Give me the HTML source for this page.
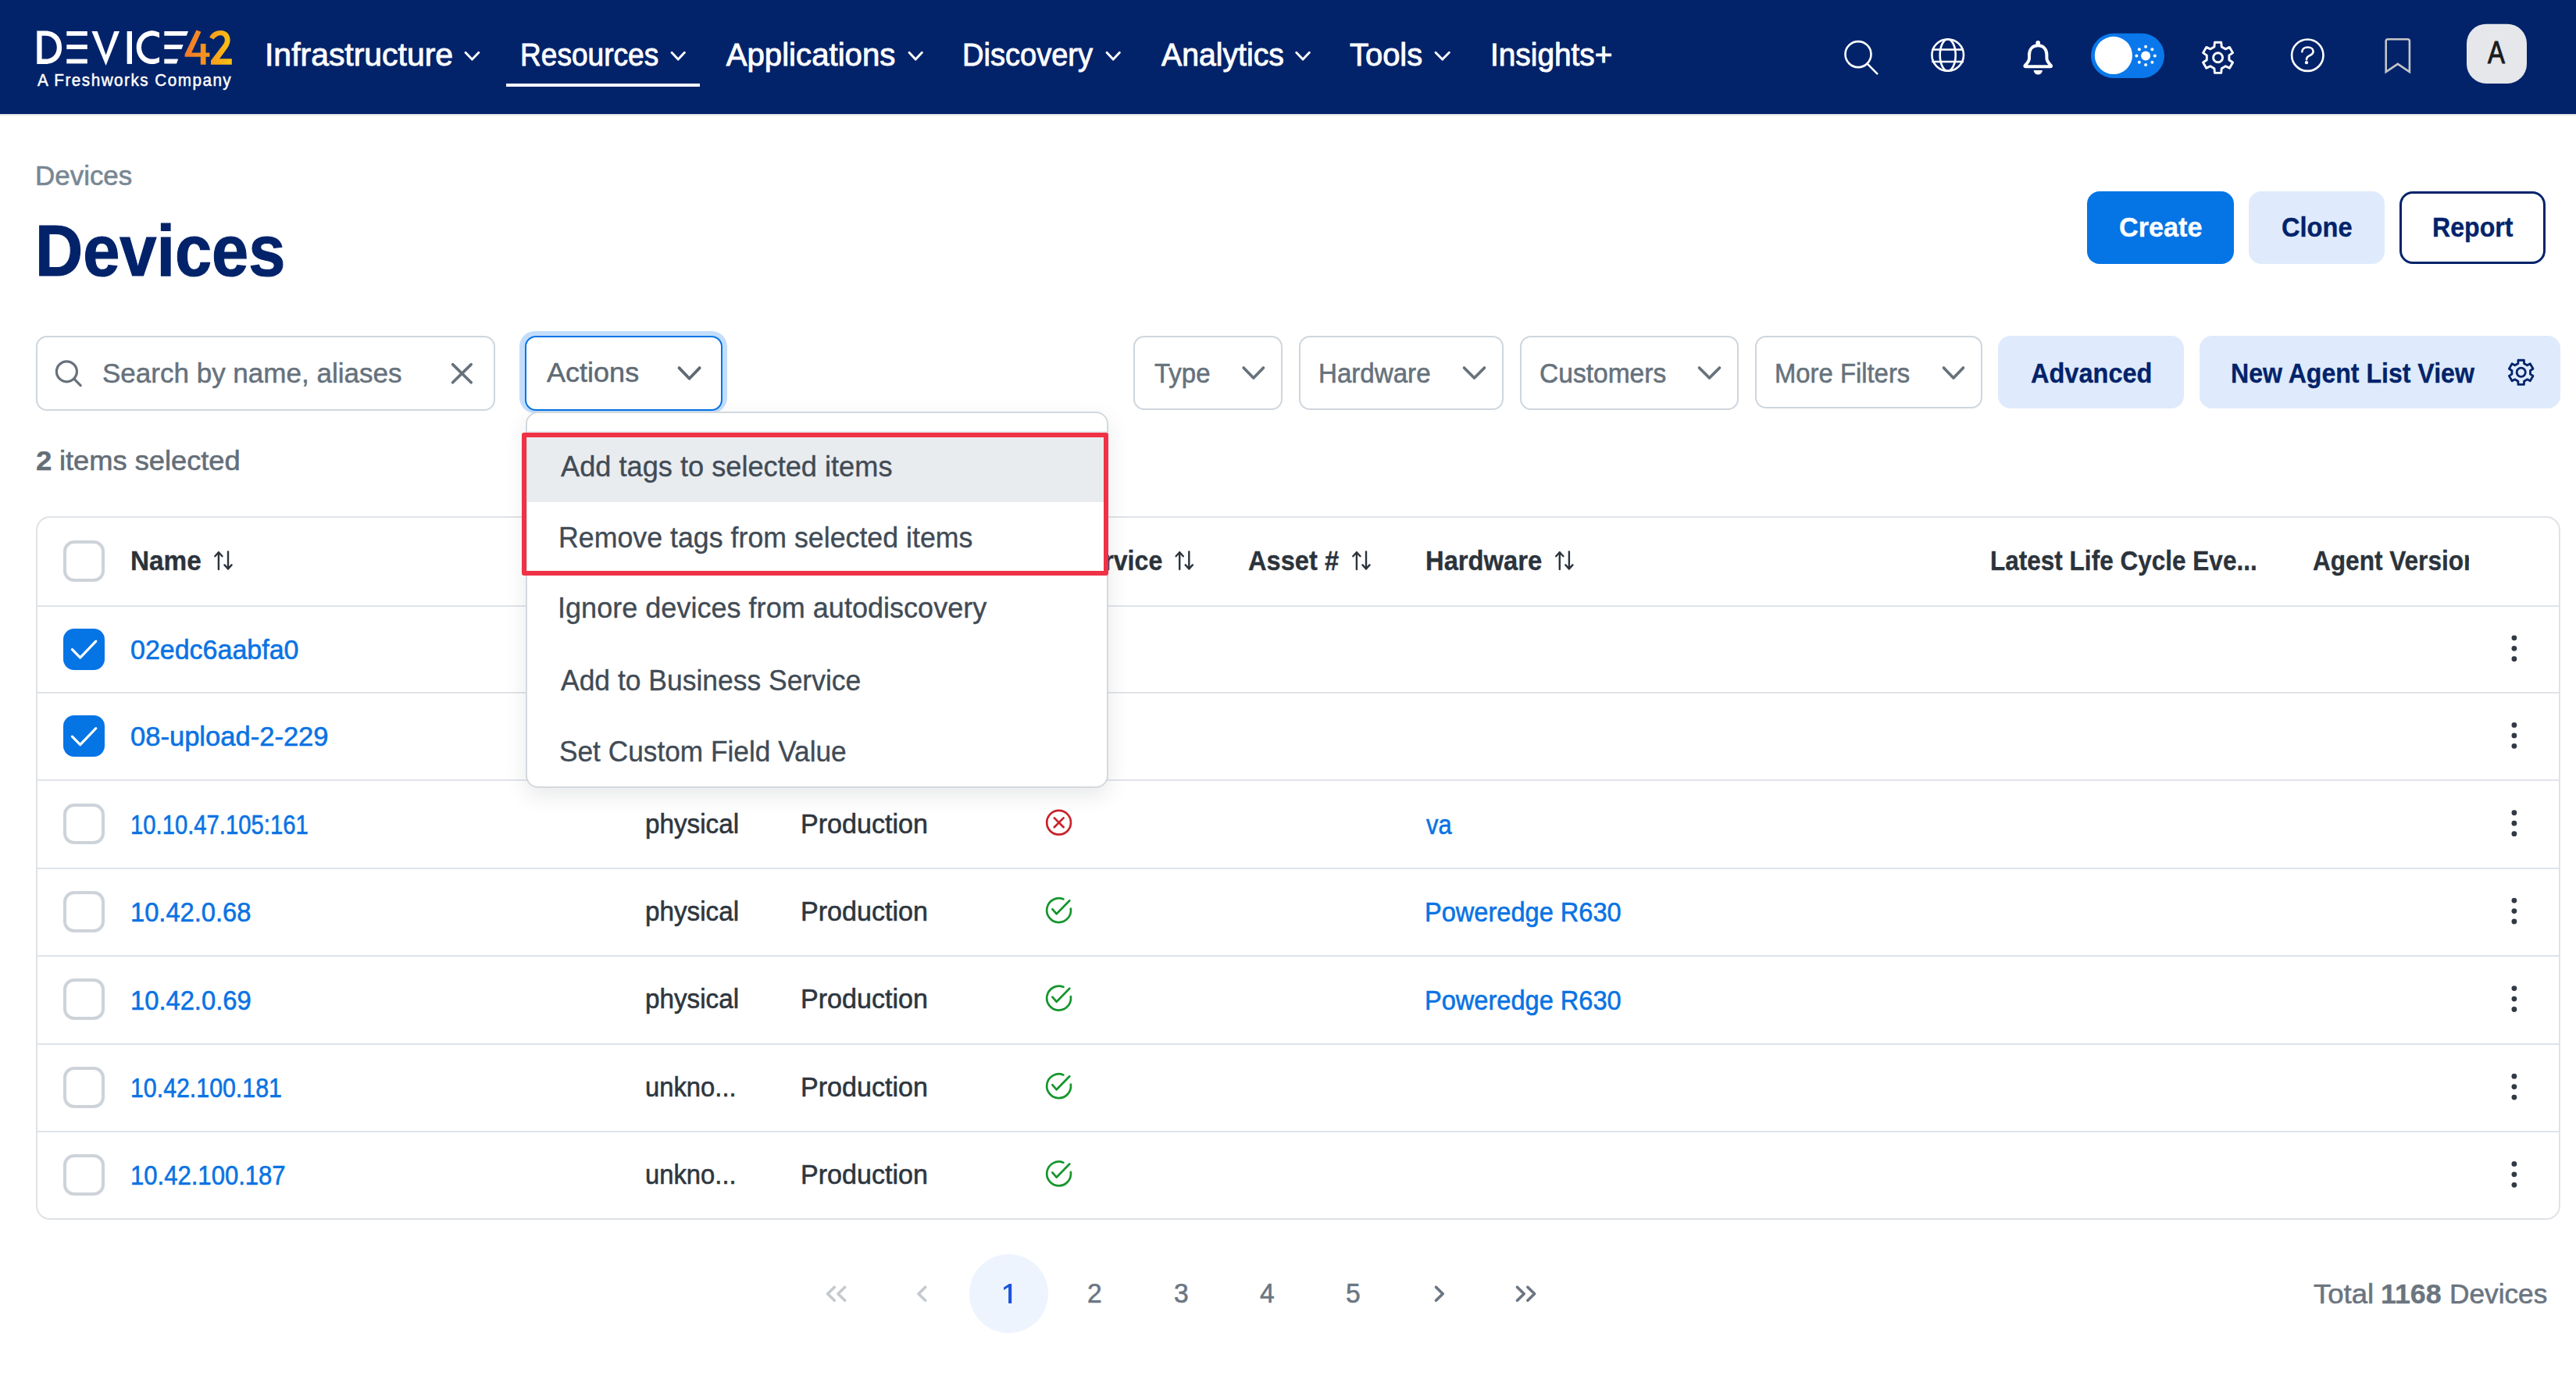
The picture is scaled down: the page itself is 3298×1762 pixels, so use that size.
<!DOCTYPE html>
<html><head><meta charset="utf-8"><title>Devices</title>
<style>
html,body{margin:0;padding:0;}
body{width:3298px;height:1762px;overflow:hidden;position:relative;background:#fff;font-family:"Liberation Sans",sans-serif;}
.t{position:absolute;white-space:nowrap;line-height:1;transform-origin:0 0;}
.r{position:absolute;}
svg.r{overflow:visible}
</style></head><body>
<div class="r" style="left:0.00px;top:0.00px;width:3298.00px;height:146.00px;background:#02236a"></div>
<div class="r" style="left:0.00px;top:146.00px;width:3298.00px;height:2.00px;background:#e3e7ea"></div>
<svg class="r" style="left:0px;top:0px;" width="320" height="146" viewBox="0 0 320 146" fill="none">
<defs><linearGradient id="g42" x1="236" y1="0" x2="298" y2="0" gradientUnits="userSpaceOnUse">
<stop offset="0" stop-color="#f2772a"/><stop offset="0.45" stop-color="#f7951e"/><stop offset="1" stop-color="#fcc412"/></linearGradient></defs>
<g fill="#fff">
<path d="M47.3,39.4 H58 C71,39.4 79.1,48 79.1,60.65 C79.1,73.3 71,81.9 58,81.9 H47.3 Z M53.6,45.7 V75.6 H58 C67,75.6 72.8,69.5 72.8,60.65 C72.8,51.8 67,45.7 58,45.7 Z" fill-rule="evenodd"/>
<rect x="85.3" y="40" width="26.5" height="5.8"/>
<rect x="85.3" y="57.2" width="26.5" height="5.8"/>
<rect x="85.3" y="75.6" width="26.5" height="5.8"/>
<path d="M117.4,40 H124.6 L135.6,70.5 L146.2,40 H153 L135.6,84 Z"/>
<rect x="162.6" y="40" width="6.4" height="41.9"/>
<path d="M204,41.8 C200.8,40 197.8,39.2 195.3,39.2 C183.4,39.2 174.7,48.5 174.7,60.65 C174.7,72.8 183.4,82.1 195.3,82.1 C197.8,82.1 200.8,81.3 204,79.5 V72.9 C201,74.7 198.2,75.6 195.3,75.6 C187,75.6 181,69 181,60.65 C181,52.3 187,45.7 195.3,45.7 C198.2,45.7 201,46.6 204,48.4 Z"/>
<path d="M210.3,40 H241 L238.8,45.8 H210.3 Z"/>
<path d="M210.3,57.2 H234.6 L232.4,63 H210.3 Z"/>
<path d="M210.3,75.6 H228.2 L226,81.4 H210.3 Z"/>
</g>
<g fill="url(#g42)">
<path d="M251.4,38.6 L257.4,40.8 L245.2,67.6 H256.8 V56.1 H263.5 V67.6 H268.4 V72.8 H263.5 V82.8 H256.8 V72.8 H236.6 V69.4 Z"/>
<path d="M268.2,47.8 C270.8,42.2 276.2,39 282.6,39 C290.2,39 294.6,44.3 294.6,51.2 C294.6,55.6 292.8,59.2 290,63 L281,75.3 H296.8 V82.8 H270 V77.5 L284.6,58.6 C286.8,55.8 287.8,53.6 287.8,51.3 C287.8,47.9 285.8,45.3 282.4,45.3 C278.9,45.3 276,47.3 273.6,50.6 Z"/>
</g></svg>
<div class="t" style="left:48.00px;top:92.27px;font-size:22.00px;color:#fff;transform:scaleX(0.9385);-webkit-text-stroke:0.5px #fff;letter-spacing:1.6px;">A Freshworks Company</div>
<div class="t" style="left:339.02px;top:50.96px;font-size:40.20px;color:#fff;transform:scaleX(1.0183);-webkit-text-stroke:0.9px #fff;">Infrastructure</div>
<svg class="r" style="left:592px;top:60px;" width="24" height="22" viewBox="592 60 24 22" fill="none"><polyline points="596.00,67.2 604.45,76.1 612.90,67.2" stroke="#fff" stroke-width="2.9" stroke-linecap="round" stroke-linejoin="round"/></svg>
<div class="t" style="left:666.43px;top:50.96px;font-size:40.20px;color:#fff;transform:scaleX(0.9225);-webkit-text-stroke:0.9px #fff;">Resources</div>
<svg class="r" style="left:856px;top:60px;" width="24" height="22" viewBox="856 60 24 22" fill="none"><polyline points="860.00,67.2 868.20,76.1 876.40,67.2" stroke="#fff" stroke-width="2.9" stroke-linecap="round" stroke-linejoin="round"/></svg>
<div class="t" style="left:929.70px;top:50.96px;font-size:40.20px;color:#fff;-webkit-text-stroke:0.9px #fff;">Applications</div>
<svg class="r" style="left:1160px;top:60px;" width="24" height="22" viewBox="1160 60 24 22" fill="none"><polyline points="1164.00,67.2 1172.20,76.1 1180.40,67.2" stroke="#fff" stroke-width="2.9" stroke-linecap="round" stroke-linejoin="round"/></svg>
<div class="t" style="left:1231.85px;top:50.96px;font-size:40.20px;color:#fff;transform:scaleX(0.9471);-webkit-text-stroke:0.9px #fff;">Discovery</div>
<svg class="r" style="left:1413px;top:60px;" width="24" height="22" viewBox="1413 60 24 22" fill="none"><polyline points="1417.00,67.2 1425.20,76.1 1433.40,67.2" stroke="#fff" stroke-width="2.9" stroke-linecap="round" stroke-linejoin="round"/></svg>
<div class="t" style="left:1486.50px;top:50.96px;font-size:40.20px;color:#fff;transform:scaleX(0.9756);-webkit-text-stroke:0.9px #fff;">Analytics</div>
<svg class="r" style="left:1655px;top:60px;" width="25" height="22" viewBox="1655 60 25 22" fill="none"><polyline points="1659.70,67.2 1668.05,76.1 1676.40,67.2" stroke="#fff" stroke-width="2.9" stroke-linecap="round" stroke-linejoin="round"/></svg>
<div class="t" style="left:1728.20px;top:50.96px;font-size:40.20px;color:#fff;transform:scaleX(0.9928);-webkit-text-stroke:0.9px #fff;">Tools</div>
<svg class="r" style="left:1834px;top:60px;" width="25" height="22" viewBox="1834 60 25 22" fill="none"><polyline points="1838.00,67.2 1846.70,76.1 1855.40,67.2" stroke="#fff" stroke-width="2.9" stroke-linecap="round" stroke-linejoin="round"/></svg>
<div class="t" style="left:1907.51px;top:50.96px;font-size:40.20px;color:#fff;transform:scaleX(0.9656);-webkit-text-stroke:0.9px #fff;">Insights+</div>
<div class="r" style="left:648.40px;top:107.00px;width:248.10px;height:4.00px;background:#fff"></div>
<svg class="r" style="left:2300px;top:0px;" width="998" height="146" viewBox="2300 0 998 146" fill="none">
<g stroke="#fff" stroke-width="2.6" fill="none" stroke-linecap="round" stroke-linejoin="round">
<circle cx="2379" cy="69.6" r="16.5"/>
<line x1="2391.2" y1="82.2" x2="2403.3" y2="94.3"/>
<circle cx="2493.7" cy="70.5" r="20.3"/>
<ellipse cx="2493.7" cy="70.5" rx="10" ry="20.3"/>
<line x1="2474.5" y1="63.5" x2="2512.9" y2="63.5"/>
<line x1="2474.5" y1="79" x2="2512.9" y2="79"/>
</g>
<path d="M2609.2,58.3 C2602,58.3 2598,63.5 2598,70.5 V74.5 C2598,78 2595.5,81 2592.6,84 C2592,84.8 2592.5,85.3 2593.5,85.3 H2624.9 C2625.9,85.3 2626.4,84.8 2625.8,84 C2622.9,81 2620.4,78 2620.4,74.5 V70.5 C2620.4,63.5 2616.4,58.3 2609.2,58.3 Z" stroke="#fff" stroke-width="4" fill="none" stroke-linejoin="round"/>
<rect x="2606.4" y="52" width="5.6" height="6" rx="2.6" fill="#fff"/>
<path d="M2603.7,90 H2614.9 A5.6,5.6 0 0 1 2603.7,90 Z" fill="#fff"/>
<rect x="2677" y="42.8" width="94" height="57.2" rx="28.6" fill="#0a78eb"/>
<circle cx="2705.9" cy="70.9" r="24.1" fill="#fff"/>
<circle cx="2747.1" cy="71.4" r="6" fill="#fff"/>
<circle cx="2758.80" cy="71.40" r="2" fill="#fff"/><circle cx="2755.37" cy="79.67" r="2" fill="#fff"/><circle cx="2747.10" cy="83.10" r="2" fill="#fff"/><circle cx="2738.83" cy="79.67" r="2" fill="#fff"/><circle cx="2735.40" cy="71.40" r="2" fill="#fff"/><circle cx="2738.83" cy="63.13" r="2" fill="#fff"/><circle cx="2747.10" cy="59.70" r="2" fill="#fff"/><circle cx="2755.37" cy="63.13" r="2" fill="#fff"/><g stroke="#fff" stroke-width="2.9" fill="none" stroke-linejoin="round"><path d="M2835.44,54.24 L2843.76,54.24 L2844.26,59.96 L2849.26,62.85 L2854.46,60.42 L2858.62,67.62 L2853.91,70.91 L2853.91,76.69 L2858.62,79.98 L2854.46,87.18 L2849.26,84.75 L2844.26,87.64 L2843.76,93.36 L2835.44,93.36 L2834.94,87.64 L2829.94,84.75 L2824.74,87.18 L2820.58,79.98 L2825.29,76.69 L2825.29,70.91 L2820.58,67.62 L2824.74,60.42 L2829.94,62.85 L2834.94,59.96 Z"/><circle cx="2839.6" cy="73.8" r="6"/></g><g stroke="#fff" stroke-width="2.6" fill="none" stroke-linecap="round" stroke-linejoin="round">
<circle cx="2954.3" cy="70.7" r="20.2"/>
<path d="M2947.3,66.3 C2947.3,62.5 2950.5,60.5 2954.5,60.5 C2958.7,60.5 2961.6,62.8 2961.6,66 C2961.6,69.5 2958,70.5 2955.5,72 C2953.8,73 2953,74 2953,76.3"/>
</g>
<circle cx="2953" cy="80.2" r="2.1" fill="#fff"/>
<path d="M3054.7,92 V52.5 C3054.7,51 3056,50.3 3057.3,50.3 H3082.5 C3083.8,50.3 3084.9,51.2 3084.9,52.5 V92 L3069.8,81.8 Z" stroke="#c6c6c6" stroke-width="2.6" fill="none" stroke-linejoin="miter"/>
<rect x="3158" y="30.7" width="77" height="76.2" rx="25" fill="#e5e7eb"/>
</svg>
<div class="t" style="left:3185.00px;top:47.50px;font-size:39.80px;color:#1b1b1b;transform:scaleX(0.8274);-webkit-text-stroke:1.0px #1b1b1b;">A</div>
<div class="t" style="left:44.70px;top:208.34px;font-size:35.50px;color:#778793;transform:scaleX(0.9843);-webkit-text-stroke:0.6px #778793;">Devices</div>
<div class="t" style="left:44.79px;top:274.13px;font-size:93.50px;color:#02236a;font-weight:700;transform:scaleX(0.9059);-webkit-text-stroke:1.2px #02236a;">Devices</div>
<div class="r" style="left:2672.00px;top:245.00px;width:188.00px;height:93.00px;background:#0574e5;border-radius:16px"></div>
<div class="t" style="left:2712.63px;top:273.37px;font-size:35.00px;color:#fff;font-weight:700;transform:scaleX(0.9774);-webkit-text-stroke:0.35px #fff;">Create</div>
<div class="r" style="left:2879.00px;top:245.00px;width:173.50px;height:93.00px;background:#dfebfc;border-radius:16px"></div>
<div class="t" style="left:2920.90px;top:273.37px;font-size:35.00px;color:#02236a;font-weight:700;transform:scaleX(0.9316);-webkit-text-stroke:0.35px #02236a;">Clone</div>
<div class="r" style="left:3072.00px;top:245.00px;width:186.60px;height:93.00px;background:#fff;border:3px solid #02236a;border-radius:17px;box-sizing:border-box"></div>
<div class="t" style="left:3113.51px;top:273.37px;font-size:35.00px;color:#02236a;font-weight:700;transform:scaleX(0.9179);-webkit-text-stroke:0.35px #02236a;">Report</div>
<div class="r" style="left:45.80px;top:430.40px;width:587.80px;height:95.40px;border:2px solid #cfd6dd;border-radius:14px;box-sizing:border-box;background:#fff"></div>
<svg class="r" style="left:60px;top:450px;" width="60" height="60" viewBox="60 450 60 60" fill="none"><g stroke="#66717c" stroke-width="3.2" fill="none" stroke-linecap="round"><circle cx="85.4" cy="475.8" r="13"/><line x1="94.8" y1="485.2" x2="103.2" y2="493.6"/></g></svg>
<div class="t" style="left:131.42px;top:461.14px;font-size:35.50px;color:#66717c;transform:scaleX(0.9863);-webkit-text-stroke:0.5px #66717c;">Search by name, aliases</div>
<svg class="r" style="left:570px;top:458px;" width="42" height="40" viewBox="570 458 42 40" fill="none"><g stroke="#66717c" stroke-width="3.6" stroke-linecap="round"><line x1="579.6" y1="466.6" x2="603.2" y2="489.8"/><line x1="603.2" y1="466.6" x2="579.6" y2="489.8"/></g></svg>
<div class="r" style="left:665.10px;top:423.80px;width:266.20px;height:105.00px;background:#c3ddfb;border-radius:20px"></div>
<div class="r" style="left:671.90px;top:429.60px;width:252.90px;height:96.60px;background:#fff;border:2.4px solid #0574e5;border-radius:14px;box-sizing:border-box"></div>
<div class="t" style="left:700.00px;top:459.96px;font-size:35.60px;color:#5f6a75;transform:scaleX(1.0128);-webkit-text-stroke:0.5px #5f6a75;">Actions</div>
<svg class="r" style="left:865px;top:465px;" width="36" height="26" viewBox="865 465 36 26" fill="none"><polyline points="869.5,471.1 882.6,484.8 895.7,471.1" stroke="#5f6a75" stroke-width="3.8" fill="none" stroke-linecap="round" stroke-linejoin="round"/></svg>
<div class="r" style="left:1451.40px;top:430.30px;width:190.80px;height:95.00px;border:2px solid #cfd6dd;border-radius:14px;box-sizing:border-box;background:#fff"></div>
<div class="t" style="left:1478.14px;top:460.01px;font-size:35.30px;color:#66727c;transform:scaleX(0.9340);-webkit-text-stroke:0.6px #66727c;">Type</div>
<svg class="r" style="left:1587px;top:465px;" width="36" height="25" viewBox="1587 465 36 25" fill="none"><polyline points="1592.2,471.0 1604.85,484.0 1617.5,471.0" stroke="#66727c" stroke-width="3.7" fill="none" stroke-linecap="round" stroke-linejoin="round"/></svg>
<div class="r" style="left:1662.60px;top:430.30px;width:262.40px;height:95.00px;border:2px solid #cfd6dd;border-radius:14px;box-sizing:border-box;background:#fff"></div>
<div class="t" style="left:1688.05px;top:460.01px;font-size:35.30px;color:#66727c;transform:scaleX(0.9382);-webkit-text-stroke:0.6px #66727c;">Hardware</div>
<svg class="r" style="left:1870px;top:465px;" width="36" height="25" viewBox="1870 465 36 25" fill="none"><polyline points="1874.5,471.0 1887.5,484.0 1900.5,471.0" stroke="#66727c" stroke-width="3.7" fill="none" stroke-linecap="round" stroke-linejoin="round"/></svg>
<div class="r" style="left:1945.50px;top:430.30px;width:280.80px;height:95.00px;border:2px solid #cfd6dd;border-radius:14px;box-sizing:border-box;background:#fff"></div>
<div class="t" style="left:1971.22px;top:460.01px;font-size:35.30px;color:#66727c;transform:scaleX(0.9506);-webkit-text-stroke:0.6px #66727c;">Customers</div>
<svg class="r" style="left:2171px;top:465px;" width="36" height="25" viewBox="2171 465 36 25" fill="none"><polyline points="2175.5,471.0 2188.5,484.0 2201.5,471.0" stroke="#66727c" stroke-width="3.7" fill="none" stroke-linecap="round" stroke-linejoin="round"/></svg>
<div class="r" style="left:2246.60px;top:430.30px;width:291.40px;height:93.10px;border:2px solid #cfd6dd;border-radius:14px;box-sizing:border-box;background:#fff"></div>
<div class="t" style="left:2272.17px;top:460.01px;font-size:35.30px;color:#66727c;transform:scaleX(0.9297);-webkit-text-stroke:0.6px #66727c;">More Filters</div>
<svg class="r" style="left:2484px;top:465px;" width="35" height="25" viewBox="2484 465 35 25" fill="none"><polyline points="2488.5,471.0 2501.0,484.0 2513.5,471.0" stroke="#66727c" stroke-width="3.7" fill="none" stroke-linecap="round" stroke-linejoin="round"/></svg>
<div class="r" style="left:2558.40px;top:430.00px;width:237.60px;height:93.00px;background:#dfebfc;border-radius:16px"></div>
<div class="t" style="left:2600.19px;top:459.97px;font-size:35.00px;color:#02236a;font-weight:700;transform:scaleX(0.9296);-webkit-text-stroke:0.35px #02236a;">Advanced</div>
<div class="r" style="left:2815.80px;top:430.00px;width:461.90px;height:93.00px;background:#dfebfc;border-radius:16px"></div>
<div class="t" style="left:2855.92px;top:459.97px;font-size:35.00px;color:#02236a;font-weight:700;transform:scaleX(0.9163);-webkit-text-stroke:0.35px #02236a;">New Agent List View</div>
<svg class="r" style="left:3200px;top:450px;" width="56" height="54" viewBox="3200 450 56 54" fill="none"><g stroke="#02236a" stroke-width="2.8" fill="none" stroke-linejoin="round"><path d="M3223.96,461.24 L3231.44,461.24 L3231.53,465.43 L3235.64,467.80 L3239.31,465.79 L3243.04,472.26 L3239.46,474.43 L3239.46,479.17 L3243.04,481.34 L3239.31,487.81 L3235.64,485.80 L3231.53,488.17 L3231.44,492.36 L3223.96,492.36 L3223.87,488.17 L3219.76,485.80 L3216.09,487.81 L3212.36,481.34 L3215.94,479.17 L3215.94,474.43 L3212.36,472.26 L3216.09,465.79 L3219.76,467.80 L3223.87,465.43 Z"/><circle cx="3227.7" cy="476.8" r="5.6"/></g></svg>
<div class="t" style="left:45.80px;top:572.74px;font-size:35.50px;color:#646e78;font-weight:700;transform:scaleX(1.0348);-webkit-text-stroke:0.35px #646e78;">2</div>
<div class="t" style="left:75.94px;top:572.74px;font-size:35.50px;color:#646e78;transform:scaleX(1.0211);-webkit-text-stroke:0.6px #646e78;">items selected</div>
<div class="r" style="left:45.80px;top:661.00px;width:3232.50px;height:901.30px;border:2px solid #dfe3e7;border-radius:18px;box-sizing:border-box;background:#fff"></div>
<div class="r" style="left:47.80px;top:775.00px;width:3228.50px;height:2.00px;background:#e0e4e8"></div>
<div class="r" style="left:47.80px;top:886.20px;width:3228.50px;height:2.00px;background:#e0e4e8"></div>
<div class="r" style="left:47.80px;top:998.20px;width:3228.50px;height:2.00px;background:#e0e4e8"></div>
<div class="r" style="left:47.80px;top:1110.80px;width:3228.50px;height:2.00px;background:#e0e4e8"></div>
<div class="r" style="left:47.80px;top:1222.90px;width:3228.50px;height:2.00px;background:#e0e4e8"></div>
<div class="r" style="left:47.80px;top:1335.80px;width:3228.50px;height:2.00px;background:#e0e4e8"></div>
<div class="r" style="left:47.80px;top:1448.00px;width:3228.50px;height:2.00px;background:#e0e4e8"></div>
<div class="r" style="left:81.10px;top:692.00px;width:52.70px;height:52.70px;border:4px solid #cdd3d9;border-radius:14px;box-sizing:border-box;background:#fff"></div>
<div class="t" style="left:166.83px;top:701.15px;font-size:34.90px;color:#2b333b;font-weight:700;transform:scaleX(0.9555);-webkit-text-stroke:0.35px #2b333b;">Name</div>
<svg class="r" style="left:272px;top:700px;" width="29" height="36" viewBox="272 700 29 36" fill="none"><g stroke="#2b333b" stroke-width="2.4" fill="none" stroke-linecap="round" stroke-linejoin="round"><line x1="279.9" y1="707.5" x2="279.9" y2="729"/><polyline points="275.29999999999995,712.3 279.9,707.3 284.5,712.3"/><line x1="292.0" y1="706.5" x2="292.0" y2="728.2"/><polyline points="287.4,723.4 292.0,728.4 296.6,723.4"/></g></svg>
<div class="t" style="left:1373.66px;top:701.15px;font-size:34.90px;color:#2b333b;font-weight:700;transform:scaleX(0.9200);-webkit-text-stroke:0.35px #2b333b;">Service</div>
<svg class="r" style="left:1503px;top:700px;" width="29" height="36" viewBox="1503 700 29 36" fill="none"><g stroke="#2b333b" stroke-width="2.4" fill="none" stroke-linecap="round" stroke-linejoin="round"><line x1="1510.2" y1="707.5" x2="1510.2" y2="729"/><polyline points="1505.6000000000001,712.3 1510.2,707.3 1514.8,712.3"/><line x1="1522.3" y1="706.5" x2="1522.3" y2="728.2"/><polyline points="1517.7,723.4 1522.3,728.4 1526.8999999999999,723.4"/></g></svg>
<div class="t" style="left:1597.98px;top:701.15px;font-size:34.90px;color:#2b333b;font-weight:700;transform:scaleX(0.9353);-webkit-text-stroke:0.35px #2b333b;">Asset #</div>
<svg class="r" style="left:1729px;top:700px;" width="29" height="36" viewBox="1729 700 29 36" fill="none"><g stroke="#2b333b" stroke-width="2.4" fill="none" stroke-linecap="round" stroke-linejoin="round"><line x1="1736.9" y1="707.5" x2="1736.9" y2="729"/><polyline points="1732.3000000000002,712.3 1736.9,707.3 1741.5,712.3"/><line x1="1749.0" y1="706.5" x2="1749.0" y2="728.2"/><polyline points="1744.4,723.4 1749.0,728.4 1753.6,723.4"/></g></svg>
<div class="t" style="left:1824.87px;top:701.15px;font-size:34.90px;color:#2b333b;font-weight:700;transform:scaleX(0.9380);-webkit-text-stroke:0.35px #2b333b;">Hardware</div>
<svg class="r" style="left:1989px;top:700px;" width="29" height="36" viewBox="1989 700 29 36" fill="none"><g stroke="#2b333b" stroke-width="2.4" fill="none" stroke-linecap="round" stroke-linejoin="round"><line x1="1996.8" y1="707.5" x2="1996.8" y2="729"/><polyline points="1992.2,712.3 1996.8,707.3 2001.3999999999999,712.3"/><line x1="2008.8999999999999" y1="706.5" x2="2008.8999999999999" y2="728.2"/><polyline points="2004.3,723.4 2008.8999999999999,728.4 2013.4999999999998,723.4"/></g></svg>
<div class="t" style="left:2547.55px;top:701.15px;font-size:34.90px;color:#2b333b;font-weight:700;transform:scaleX(0.9036);-webkit-text-stroke:0.35px #2b333b;">Latest Life Cycle Eve...</div>
<div class="r" style="left:2940px;top:690px;width:221.4px;height:60px;overflow:hidden">
<div class="t" style="left:20.81px;top:11.15px;font-size:34.9px;font-weight:700;color:#2b333b;transform:scaleX(0.905);-webkit-text-stroke:0.35px #2b333b">Agent Version</div></div>
<div class="r" style="left:81.10px;top:804.60px;width:52.70px;height:53.30px;background:#0574e5;border-radius:14px"></div>
<svg class="r" style="left:81px;top:804px;" width="53" height="54" viewBox="81 804 53 54" fill="none"><polyline points="92.4,831.6 102.7,842.1 122.8,821.1" stroke="#fff" stroke-width="3.2" fill="none" stroke-linecap="round" stroke-linejoin="round"/></svg>
<div class="t" style="left:167.31px;top:814.84px;font-size:34.20px;color:#0a73e3;transform:scaleX(0.9942);-webkit-text-stroke:0.6px #0a73e3;">02edc6aabfa0</div>
<svg class="r" style="left:3205px;top:806px;" width="26" height="50" viewBox="3205 806 26 50" fill="none"><g fill="#323a44"><circle cx="3218.9" cy="816.85" r="3.4"/><circle cx="3218.9" cy="830.30" r="3.4"/><circle cx="3218.9" cy="843.75" r="3.4"/></g></svg>
<div class="r" style="left:81.10px;top:916.20px;width:52.70px;height:53.30px;background:#0574e5;border-radius:14px"></div>
<svg class="r" style="left:81px;top:916px;" width="53" height="54" viewBox="81 916 53 54" fill="none"><polyline points="92.4,943.2 102.7,953.7 122.8,932.7" stroke="#fff" stroke-width="3.2" fill="none" stroke-linecap="round" stroke-linejoin="round"/></svg>
<div class="t" style="left:167.29px;top:926.44px;font-size:34.20px;color:#0a73e3;transform:scaleX(1.0105);-webkit-text-stroke:0.6px #0a73e3;">08-upload-2-229</div>
<svg class="r" style="left:3205px;top:918px;" width="26" height="50" viewBox="3205 918 26 50" fill="none"><g fill="#323a44"><circle cx="3218.9" cy="928.45" r="3.4"/><circle cx="3218.9" cy="941.90" r="3.4"/><circle cx="3218.9" cy="955.35" r="3.4"/></g></svg>
<div class="r" style="left:81.10px;top:1028.50px;width:52.70px;height:52.70px;border:4px solid #cdd3d9;border-radius:14px;box-sizing:border-box;background:#fff"></div>
<div class="t" style="left:166.81px;top:1038.74px;font-size:34.20px;color:#0a73e3;transform:scaleX(0.8556);-webkit-text-stroke:0.6px #0a73e3;">10.10.47.105:161</div>
<div class="t" style="left:825.61px;top:1037.64px;font-size:35.50px;color:#2e363e;transform:scaleX(0.9363);-webkit-text-stroke:0.6px #2e363e;">physical</div>
<div class="t" style="left:1024.77px;top:1037.64px;font-size:35.50px;color:#2e363e;transform:scaleX(0.9598);-webkit-text-stroke:0.6px #2e363e;">Production</div>
<svg class="r" style="left:1330px;top:1031px;" width="52" height="44" viewBox="1330 1031 52 44" fill="none"><g stroke="#c9222b" stroke-width="2.7" fill="none" stroke-linecap="round"><circle cx="1355.6" cy="1053.3" r="15.4"/><line x1="1349.8" y1="1047.3999999999999" x2="1361.6" y2="1059.2"/><line x1="1361.6" y1="1047.3999999999999" x2="1349.8" y2="1059.2"/></g></svg>
<div class="t" style="left:1826.20px;top:1038.07px;font-size:35.00px;color:#0a73e3;transform:scaleX(0.8814);-webkit-text-stroke:0.6px #0a73e3;">va</div>
<svg class="r" style="left:3205px;top:1030px;" width="26" height="50" viewBox="3205 1030 26 50" fill="none"><g fill="#323a44"><circle cx="3218.9" cy="1040.75" r="3.4"/><circle cx="3218.9" cy="1054.20" r="3.4"/><circle cx="3218.9" cy="1067.65" r="3.4"/></g></svg>
<div class="r" style="left:81.10px;top:1140.85px;width:52.70px;height:52.70px;border:4px solid #cdd3d9;border-radius:14px;box-sizing:border-box;background:#fff"></div>
<div class="t" style="left:166.55px;top:1151.09px;font-size:34.20px;color:#0a73e3;transform:scaleX(0.9558);-webkit-text-stroke:0.6px #0a73e3;">10.42.0.68</div>
<div class="t" style="left:825.61px;top:1149.99px;font-size:35.50px;color:#2e363e;transform:scaleX(0.9363);-webkit-text-stroke:0.6px #2e363e;">physical</div>
<div class="t" style="left:1024.77px;top:1149.99px;font-size:35.50px;color:#2e363e;transform:scaleX(0.9598);-webkit-text-stroke:0.6px #2e363e;">Production</div>
<svg class="r" style="left:1330px;top:1143px;" width="52" height="44" viewBox="1330 1143 52 44" fill="none"><g stroke="#15952c" stroke-width="2.7" fill="none" stroke-linecap="round" stroke-linejoin="round"><path d="M1361.37,1151.37 A15.4,15.4 0 1 0 1370.85,1163.51"/><polyline points="1347.3,1164.1499999999999 1352.7,1170.2499999999998 1369.3,1153.2499999999998"/></g></svg>
<div class="t" style="left:1823.60px;top:1150.42px;font-size:35.00px;color:#0a73e3;transform:scaleX(0.9304);-webkit-text-stroke:0.6px #0a73e3;">Poweredge R630</div>
<svg class="r" style="left:3205px;top:1142px;" width="26" height="50" viewBox="3205 1142 26 50" fill="none"><g fill="#323a44"><circle cx="3218.9" cy="1153.10" r="3.4"/><circle cx="3218.9" cy="1166.55" r="3.4"/><circle cx="3218.9" cy="1180.00" r="3.4"/></g></svg>
<div class="r" style="left:81.10px;top:1253.35px;width:52.70px;height:52.70px;border:4px solid #cdd3d9;border-radius:14px;box-sizing:border-box;background:#fff"></div>
<div class="t" style="left:166.55px;top:1263.59px;font-size:34.20px;color:#0a73e3;transform:scaleX(0.9569);-webkit-text-stroke:0.6px #0a73e3;">10.42.0.69</div>
<div class="t" style="left:825.61px;top:1262.49px;font-size:35.50px;color:#2e363e;transform:scaleX(0.9363);-webkit-text-stroke:0.6px #2e363e;">physical</div>
<div class="t" style="left:1024.77px;top:1262.49px;font-size:35.50px;color:#2e363e;transform:scaleX(0.9598);-webkit-text-stroke:0.6px #2e363e;">Production</div>
<svg class="r" style="left:1330px;top:1256px;" width="52" height="44" viewBox="1330 1256 52 44" fill="none"><g stroke="#15952c" stroke-width="2.7" fill="none" stroke-linecap="round" stroke-linejoin="round"><path d="M1361.37,1263.87 A15.4,15.4 0 1 0 1370.85,1276.01"/><polyline points="1347.3,1276.6499999999999 1352.7,1282.7499999999998 1369.3,1265.7499999999998"/></g></svg>
<div class="t" style="left:1823.60px;top:1262.92px;font-size:35.00px;color:#0a73e3;transform:scaleX(0.9304);-webkit-text-stroke:0.6px #0a73e3;">Poweredge R630</div>
<svg class="r" style="left:3205px;top:1255px;" width="26" height="50" viewBox="3205 1255 26 50" fill="none"><g fill="#323a44"><circle cx="3218.9" cy="1265.60" r="3.4"/><circle cx="3218.9" cy="1279.05" r="3.4"/><circle cx="3218.9" cy="1292.50" r="3.4"/></g></svg>
<div class="r" style="left:81.10px;top:1365.90px;width:52.70px;height:52.70px;border:4px solid #cdd3d9;border-radius:14px;box-sizing:border-box;background:#fff"></div>
<div class="t" style="left:166.73px;top:1376.14px;font-size:34.20px;color:#0a73e3;transform:scaleX(0.8867);-webkit-text-stroke:0.6px #0a73e3;">10.42.100.181</div>
<div class="t" style="left:825.63px;top:1375.04px;font-size:35.50px;color:#2e363e;transform:scaleX(0.9235);-webkit-text-stroke:0.6px #2e363e;">unkno...</div>
<div class="t" style="left:1024.77px;top:1375.04px;font-size:35.50px;color:#2e363e;transform:scaleX(0.9598);-webkit-text-stroke:0.6px #2e363e;">Production</div>
<svg class="r" style="left:1330px;top:1368px;" width="52" height="44" viewBox="1330 1368 52 44" fill="none"><g stroke="#15952c" stroke-width="2.7" fill="none" stroke-linecap="round" stroke-linejoin="round"><path d="M1361.37,1376.42 A15.4,15.4 0 1 0 1370.85,1388.56"/><polyline points="1347.3,1389.2 1352.7,1395.3 1369.3,1378.3"/></g></svg>
<svg class="r" style="left:3205px;top:1367px;" width="26" height="50" viewBox="3205 1367 26 50" fill="none"><g fill="#323a44"><circle cx="3218.9" cy="1378.15" r="3.4"/><circle cx="3218.9" cy="1391.60" r="3.4"/><circle cx="3218.9" cy="1405.05" r="3.4"/></g></svg>
<div class="r" style="left:81.10px;top:1478.15px;width:52.70px;height:52.70px;border:4px solid #cdd3d9;border-radius:14px;box-sizing:border-box;background:#fff"></div>
<div class="t" style="left:166.67px;top:1488.39px;font-size:34.20px;color:#0a73e3;transform:scaleX(0.9086);-webkit-text-stroke:0.6px #0a73e3;">10.42.100.187</div>
<div class="t" style="left:825.63px;top:1487.29px;font-size:35.50px;color:#2e363e;transform:scaleX(0.9235);-webkit-text-stroke:0.6px #2e363e;">unkno...</div>
<div class="t" style="left:1024.77px;top:1487.29px;font-size:35.50px;color:#2e363e;transform:scaleX(0.9598);-webkit-text-stroke:0.6px #2e363e;">Production</div>
<svg class="r" style="left:1330px;top:1480px;" width="52" height="44" viewBox="1330 1480 52 44" fill="none"><g stroke="#15952c" stroke-width="2.7" fill="none" stroke-linecap="round" stroke-linejoin="round"><path d="M1361.37,1488.67 A15.4,15.4 0 1 0 1370.85,1500.81"/><polyline points="1347.3,1501.45 1352.7,1507.55 1369.3,1490.55"/></g></svg>
<svg class="r" style="left:3205px;top:1480px;" width="26" height="50" viewBox="3205 1480 26 50" fill="none"><g fill="#323a44"><circle cx="3218.9" cy="1490.40" r="3.4"/><circle cx="3218.9" cy="1503.85" r="3.4"/><circle cx="3218.9" cy="1517.30" r="3.4"/></g></svg>
<div class="r" style="left:673.30px;top:527.00px;width:746.00px;height:482.00px;background:#fff;border:2px solid #d3d9de;border-radius:16px;box-sizing:border-box;box-shadow:0 10px 28px rgba(30,40,50,0.10)"></div>
<div class="r" style="left:675.30px;top:552.00px;width:742.00px;height:91.40px;background:#e9ecef"></div>
<div class="t" style="left:717.50px;top:578.87px;font-size:37.00px;color:#414b55;transform:scaleX(0.9782);-webkit-text-stroke:0.35px #414b55;">Add tags to selected items</div>
<div class="t" style="left:714.64px;top:669.57px;font-size:37.00px;color:#414b55;transform:scaleX(0.9662);-webkit-text-stroke:0.35px #414b55;">Remove tags from selected items</div>
<div class="t" style="left:714.25px;top:760.27px;font-size:37.00px;color:#414b55;transform:scaleX(0.9748);-webkit-text-stroke:0.35px #414b55;">Ignore devices from autodiscovery</div>
<div class="t" style="left:717.50px;top:852.77px;font-size:37.00px;color:#414b55;transform:scaleX(0.9580);-webkit-text-stroke:0.35px #414b55;">Add to Business Service</div>
<div class="t" style="left:715.91px;top:943.57px;font-size:37.00px;color:#414b55;transform:scaleX(0.9527);-webkit-text-stroke:0.35px #414b55;">Set Custom Field Value</div>
<div class="r" style="left:668.30px;top:554.20px;width:751.00px;height:182.60px;border:6px solid #ef3246;border-radius:3px;box-sizing:border-box"></div>
<div class="r" style="left:1240.6px;top:1605.9px;width:101.6px;height:101px;border-radius:50%;background:#edf4fe"></div>
<svg class="r" style="left:1280px;top:1640px;" width="20" height="32" viewBox="1280 1640 20 32" fill="none"><path d="M1285.1,1648.4 L1292,1644 H1295.2 V1668.9 H1291.1 V1648.2 L1285.1,1652 Z" fill="#1d52d9"/></svg>
<div class="t" style="left:1391.58px;top:1639.23px;font-size:35.40px;color:#6b7682;transform:scaleX(0.9500);-webkit-text-stroke:0.6px #6b7682;">2</div>
<div class="t" style="left:1502.65px;top:1639.23px;font-size:35.40px;color:#6b7682;transform:scaleX(0.9500);-webkit-text-stroke:0.6px #6b7682;">3</div>
<div class="t" style="left:1612.95px;top:1639.23px;font-size:35.40px;color:#6b7682;transform:scaleX(0.9500);-webkit-text-stroke:0.6px #6b7682;">4</div>
<div class="t" style="left:1723.17px;top:1639.23px;font-size:35.40px;color:#6b7682;transform:scaleX(0.9500);-webkit-text-stroke:0.6px #6b7682;">5</div>
<svg class="r" style="left:1040px;top:1630px;" width="950" height="60" viewBox="1040 1630 950 60" fill="none"><polyline points="1068.3,1648.3 1059.6,1656.8 1068.3,1665.3" stroke="#c5cace" stroke-width="3.7" fill="none" stroke-linecap="round" stroke-linejoin="round"/><polyline points="1081.7,1648.3 1073,1656.8 1081.7,1665.3" stroke="#c5cace" stroke-width="3.7" fill="none" stroke-linecap="round" stroke-linejoin="round"/><polyline points="1184.7,1648.3 1176,1656.8 1184.7,1665.3" stroke="#c5cace" stroke-width="3.7" fill="none" stroke-linecap="round" stroke-linejoin="round"/><polyline points="1838.5,1648.3 1847.2,1656.8 1838.5,1665.3" stroke="#6b7682" stroke-width="3.7" fill="none" stroke-linecap="round" stroke-linejoin="round"/><polyline points="1942.5,1648.3 1951.2,1656.8 1942.5,1665.3" stroke="#6b7682" stroke-width="3.7" fill="none" stroke-linecap="round" stroke-linejoin="round"/><polyline points="1955.9,1648.3 1964.6,1656.8 1955.9,1665.3" stroke="#6b7682" stroke-width="3.7" fill="none" stroke-linecap="round" stroke-linejoin="round"/></svg>
<div class="t" style="left:2962.27px;top:1639.70px;font-size:34.60px;color:#6b7580;transform:scaleX(1.0564);-webkit-text-stroke:0.6px #6b7580;">Total</div>
<div class="t" style="left:3048.45px;top:1639.70px;font-size:34.60px;color:#6b7580;font-weight:700;transform:scaleX(1.0355);-webkit-text-stroke:0.35px #6b7580;">1168</div>
<div class="t" style="left:3135.88px;top:1639.70px;font-size:34.60px;color:#6b7580;transform:scaleX(1.0191);-webkit-text-stroke:0.6px #6b7580;">Devices</div>
</body></html>
